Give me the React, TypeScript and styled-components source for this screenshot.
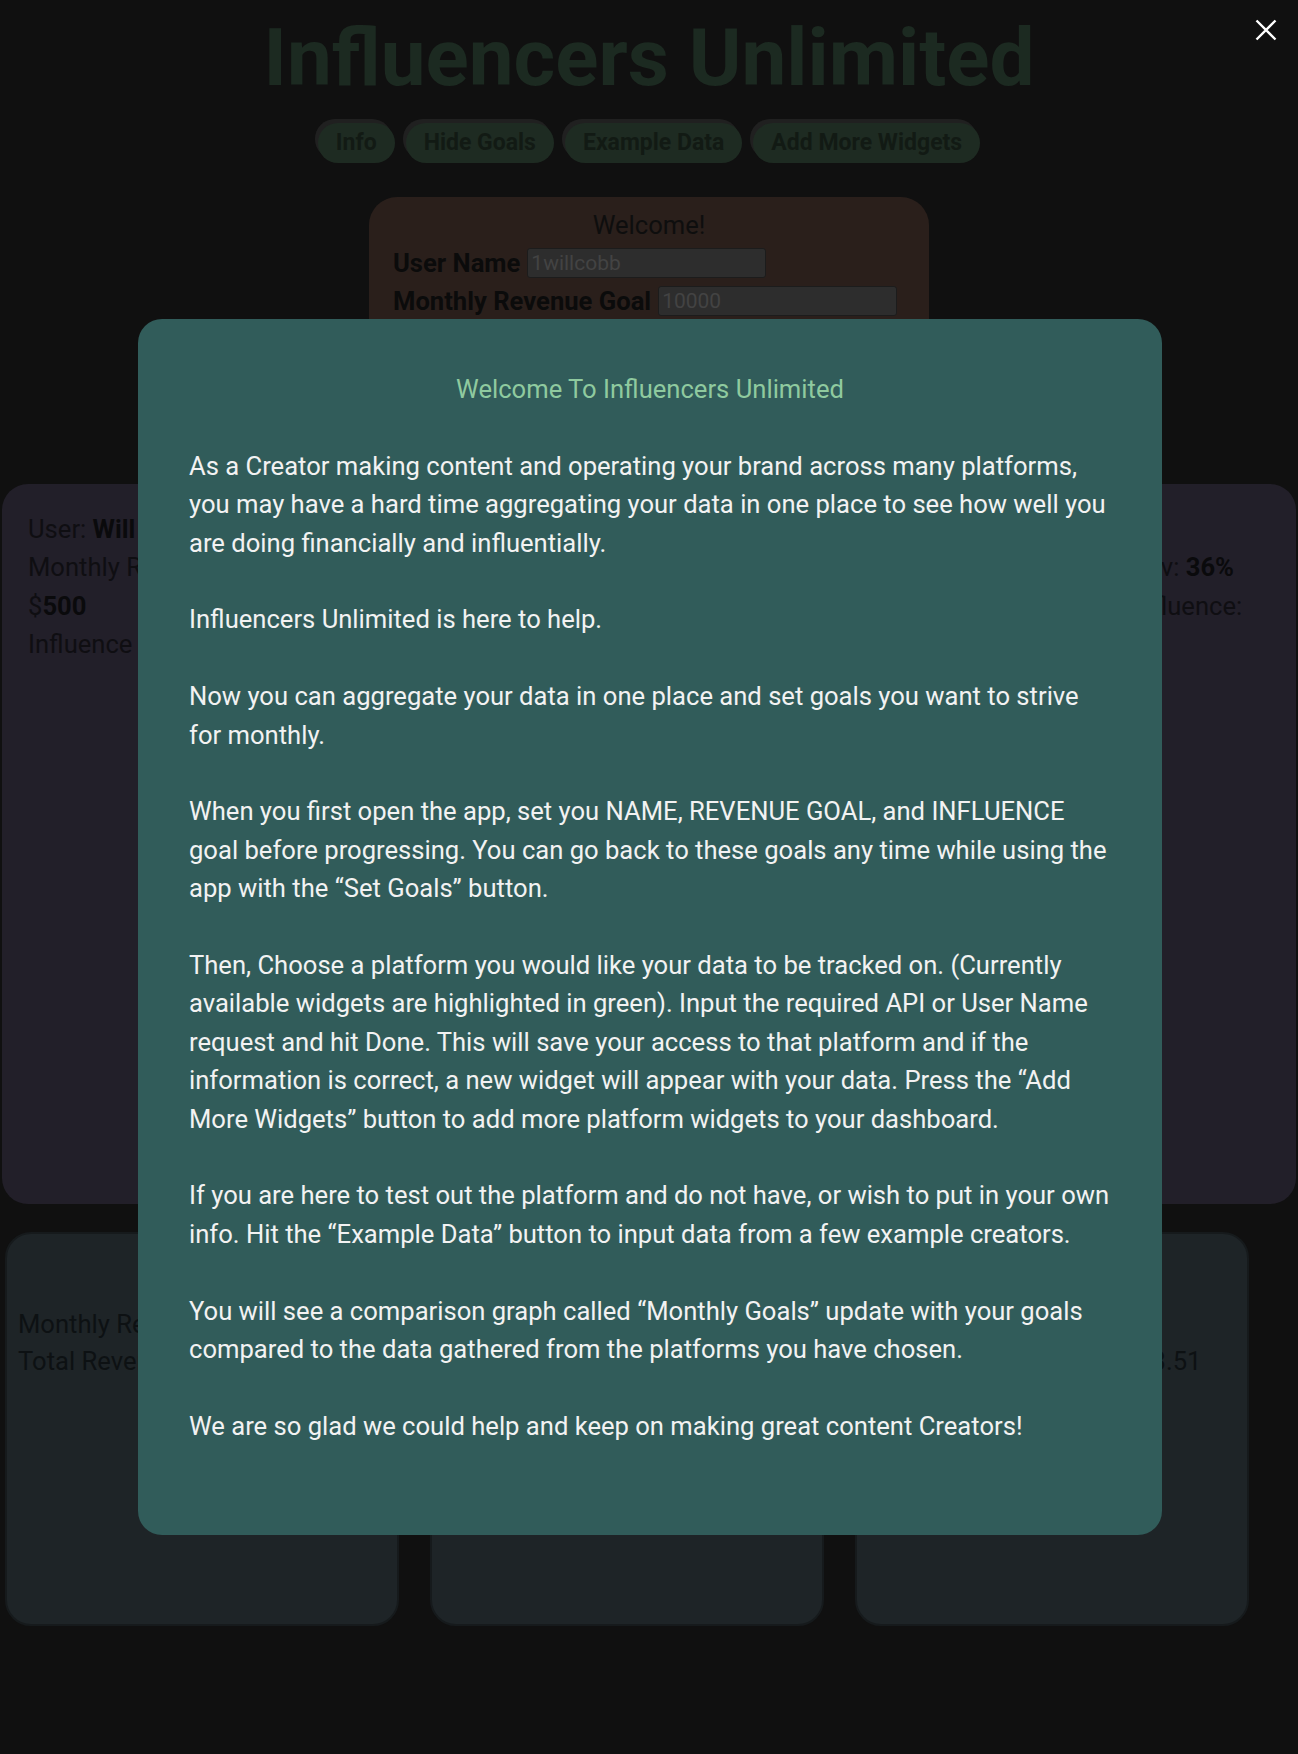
import React from "react";
import styled, { createGlobalStyle } from "styled-components";

const GlobalStyle = createGlobalStyle`
  html, body {
    margin: 0;
    padding: 0;
    background: #101010;
  }
  body {
    font-family: Roboto, "Liberation Sans", Arial, sans-serif;
  }
  * {
    box-sizing: border-box;
  }
`;

const Page = styled.div`
  position: relative;
  min-height: 1754px;
  display: flex;
  flex-direction: column;
`;

const Title = styled.h1`
  margin: 11px 0 0;
  font: 700 80px/94px Roboto, "Liberation Sans", sans-serif;
  color: #1c2a21;
  text-align: center;
`;

const ButtonRow = styled.nav`
  display: flex;
  justify-content: center;
  gap: 11px;
  margin-top: 18px;
`;

const NavButton = styled.button`
  height: 40px;
  padding: 0 18px;
  border: none;
  border-radius: 20px;
  background: #1e2b22;
  color: #121a14;
  font: 700 23px/40px Roboto, "Liberation Sans", sans-serif;
  box-shadow: -3px -4px 0 #202020;
  cursor: pointer;
`;

const WelcomeCard = styled.section`
  width: 560px;
  height: 250px;
  margin: 34px auto 0;
  padding: 9px 24px 0;
  border-radius: 28px;
  background: #2a1f1b;
`;

const WelcomeHeading = styled.div`
  font: 400 25.6px/38.4px Roboto, sans-serif;
  color: #0e0e0e;
  text-align: center;
`;

const FieldRow = styled.label`
  display: flex;
  align-items: center;
  gap: 7px;
  height: 38px;
`;

const FieldLabel = styled.span`
  font: 700 25.6px/38px Roboto, sans-serif;
  color: #0b0b0b;
  white-space: nowrap;
`;

const FieldInput = styled.input`
  width: 239px;
  height: 30px;
  padding: 0 3px;
  border: 1px solid #1c1c1c;
  border-radius: 3px;
  background: #2d2d2d;
  font: 400 21px Roboto, sans-serif;
  color: #444444;
  &::placeholder {
    color: #434343;
  }
`;

const StatsRow = styled.div`
  display: grid;
  grid-template-columns: 1fr 1fr;
  gap: 4px;
  padding: 0 2px;
  margin-top: 37px;
`;

const StatCard = styled.div`
  height: 720px;
  padding: 26px;
  border-radius: 26px;
  background: #221f29;
  font: 400 25.6px/38.4px Roboto, sans-serif;
  color: #0f0e12;
`;

const StatLine = styled.div``;

const Strong = styled.b`
  font-weight: 700;
  color: #0a0a0c;
`;

const PlatformRow = styled.div`
  display: flex;
  gap: 31px;
  padding-left: 5px;
  margin-top: 28px;
`;

const PlatformCard = styled.div`
  width: 394px;
  height: 394px;
  padding: 72px 11px 0;
  border: 2px solid #161a1c;
  border-radius: 26px;
  background: #1e2427;
  font: 400 25.6px/37px Roboto, sans-serif;
  color: #0d1113;
`;

const Modal = styled.div`
  position: absolute;
  top: 319px;
  left: 138px;
  width: 1024px;
  padding: 51px 46px 51px 51px;
  border-radius: 24px;
  background: #315c5a;
  color: #f2f2f2;
  font: 400 25.6px/38.4px Roboto, "Liberation Sans", sans-serif;
`;

const ModalTitle = styled.h2`
  margin: 0 0 38.4px;
  padding-right: 5px;
  font: inherit;
  color: #8fca9f;
  text-align: center;
`;

const ModalText = styled.p`
  margin: 0 0 38.4px;
`;

const CloseButton = styled.button`
  position: absolute;
  top: 19px;
  right: 21px;
  width: 22px;
  height: 22px;
  padding: 0;
  border: none;
  background: transparent;
  cursor: pointer;
  display: flex;
`;

const CloseIcon = () => (
  <svg width="22" height="22" viewBox="0 0 22 22" fill="none">
    <path d="M1.5 1.5L20.5 20.5M20.5 1.5L1.5 20.5" stroke="#ffffff" strokeWidth="2.4" />
  </svg>
);

const paragraphs = [
  "As a Creator making content and operating your brand across many platforms, you may have a hard time aggregating your data in one place to see how well you are doing financially and influentially.",
  "Influencers Unlimited is here to help.",
  "Now you can aggregate your data in one place and set goals you want to strive for monthly.",
  "When you first open the app, set you NAME, REVENUE GOAL, and INFLUENCE goal before progressing. You can go back to these goals any time while using the app with the \u201cSet Goals\u201d button.",
  "Then, Choose a platform you would like your data to be tracked on. (Currently available widgets are highlighted in green). Input the required API or User Name request and hit Done. This will save your access to that platform and if the information is correct, a new widget will appear with your data. Press the \u201cAdd More Widgets\u201d button to add more platform widgets to your dashboard.",
  "If you are here to test out the platform and do not have, or wish to put in your own info. Hit the \u201cExample Data\u201d button to input data from a few example creators.",
  "You will see a comparison graph called \u201cMonthly Goals\u201d update with your goals compared to the data gathered from the platforms you have chosen.",
  "We are so glad we could help and keep on making great content Creators!",
];

export default function App() {
  return (
    <>
      <GlobalStyle />
      <Page>
        <Title>Influencers Unlimited</Title>
        <ButtonRow>
          <NavButton>Info</NavButton>
          <NavButton>Hide Goals</NavButton>
          <NavButton>Example Data</NavButton>
          <NavButton>Add More Widgets</NavButton>
        </ButtonRow>

        <WelcomeCard>
          <WelcomeHeading>Welcome!</WelcomeHeading>
          <FieldRow>
            <FieldLabel>User Name</FieldLabel>
            <FieldInput placeholder="1willcobb" />
          </FieldRow>
          <FieldRow>
            <FieldLabel>Monthly Revenue Goal</FieldLabel>
            <FieldInput placeholder="10000" />
          </FieldRow>
          <FieldRow>
            <FieldLabel>Monthly Influence Goal</FieldLabel>
            <FieldInput placeholder="5000" />
          </FieldRow>
        </WelcomeCard>

        <StatsRow>
          <StatCard>
            <StatLine>
              User: <Strong>Will Cobb</Strong>
            </StatLine>
            <StatLine>Monthly Revenue:</StatLine>
            <StatLine>
              $<Strong>500</Strong>
            </StatLine>
            <StatLine>Influence Score: 1,400</StatLine>
          </StatCard>
          <StatCard>
            <StatLine>Monthly Goals</StatLine>
            <StatLine>
              Percent of the Monthly Goal Reached in Rev: <Strong>36%</Strong>
            </StatLine>
            <StatLine>
              Percent of the Monthly Goal Reached in Influence: <Strong>28%</Strong>
            </StatLine>
          </StatCard>
        </StatsRow>

        <PlatformRow>
          <PlatformCard>
            <StatLine>Monthly Revenue: $500</StatLine>
            <StatLine>Total Revenue: $6,000</StatLine>
          </PlatformCard>
          <PlatformCard>
            <StatLine>Monthly Revenue: $900</StatLine>
            <StatLine>Total Revenue: $9,800</StatLine>
          </PlatformCard>
          <PlatformCard>
            <StatLine>Monthly Revenue: $1,240</StatLine>
            <StatLine>Total Revenue: $1,284,593.51</StatLine>
          </PlatformCard>
        </PlatformRow>

        <Modal role="dialog">
          <ModalTitle>Welcome To Influencers Unlimited</ModalTitle>
          {paragraphs.map((p, i) => (
            <ModalText key={i}>{p}</ModalText>
          ))}
        </Modal>

        <CloseButton aria-label="Close">
          <CloseIcon />
        </CloseButton>
      </Page>
    </>
  );
}
